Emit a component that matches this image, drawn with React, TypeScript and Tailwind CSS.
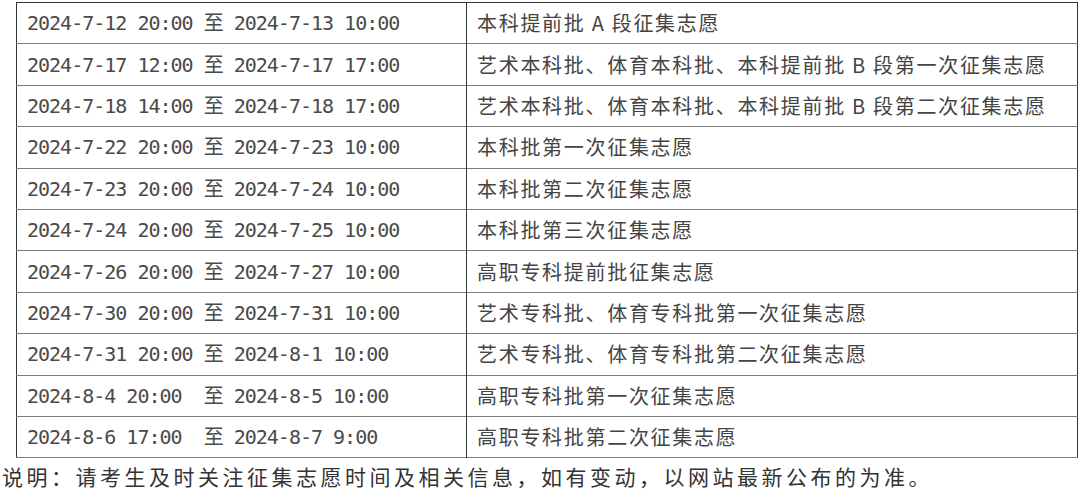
const rows: [string, string][] = [
  ['2024-7-12 20:00 至 2024-7-13 10:00', '本科提前批 A 段征集志愿'],
  ['2024-7-17 12:00 至 2024-7-17 17:00', '艺术本科批、体育本科批、本科提前批 B 段第一次征集志愿'],
  ['2024-7-18 14:00 至 2024-7-18 17:00', '艺术本科批、体育本科批、本科提前批 B 段第二次征集志愿'],
  ['2024-7-22 20:00 至 2024-7-23 10:00', '本科批第一次征集志愿'],
  ['2024-7-23 20:00 至 2024-7-24 10:00', '本科批第二次征集志愿'],
  ['2024-7-24 20:00 至 2024-7-25 10:00', '本科批第三次征集志愿'],
  ['2024-7-26 20:00 至 2024-7-27 10:00', '高职专科提前批征集志愿'],
  ['2024-7-30 20:00 至 2024-7-31 10:00', '艺术专科批、体育专科批第一次征集志愿'],
  ['2024-7-31 20:00 至 2024-8-1 10:00', '艺术专科批、体育专科批第二次征集志愿'],
  ['2024-8-4 20:00  至 2024-8-5 10:00', '高职专科批第一次征集志愿'],
  ['2024-8-6 17:00  至 2024-8-7 9:00', '高职专科批第二次征集志愿'],
];

export default function App() {
  return (
    <div className="w-[1080px] h-[497px] bg-white overflow-hidden pt-[2px]">
      <table className="ml-[16px] w-[1062px] border-collapse border border-[#333] table-fixed">
        <colgroup>
          <col className="w-[450px]" />
          <col />
        </colgroup>
        <tbody>
          {rows.map(([time, name], i) => (
            <tr key={i} className="h-[41.4px] border-b border-[#7a7a7a]">
              <td
                className="pl-[10px] border-r border-[#333] text-[20px] tracking-[-1px] text-[#4a4a4a] whitespace-pre leading-none"
                style={{ fontFamily: '"DejaVu Sans Mono", "Noto Sans CJK SC", monospace' }}
              >
                {time}
              </td>
              <td
                className="pl-[10px] text-[20px] tracking-[1.7px] text-[#444] whitespace-nowrap leading-none"
                style={{ fontFamily: '"Noto Sans CJK SC", sans-serif' }}
              >
                {name}
              </td>
            </tr>
          ))}
        </tbody>
      </table>
      <p
        className="mt-[3px] pl-[2px] text-[21px] leading-[30px] tracking-[3.5px] text-[#333] whitespace-nowrap"
        style={{ fontFamily: '"Noto Sans CJK SC", sans-serif' }}
      >
        说明：请考生及时关注征集志愿时间及相关信息，如有变动，以网站最新公布的为准。
      </p>
    </div>
  );
}
